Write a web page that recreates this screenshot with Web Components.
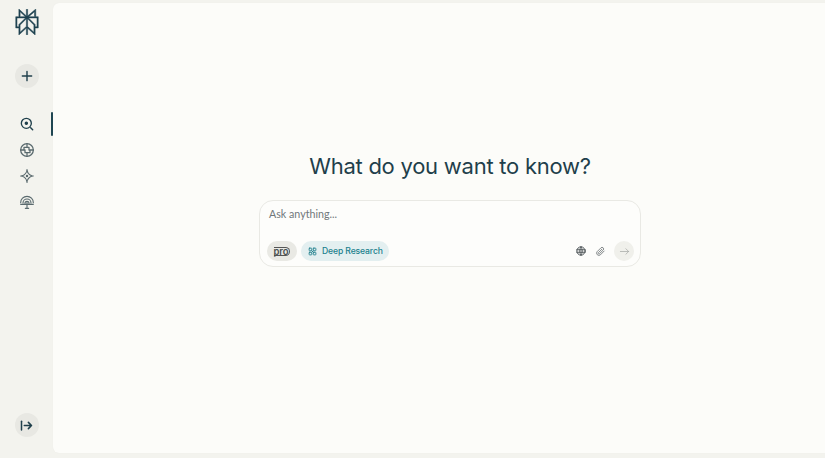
<!DOCTYPE html>
<html><head><meta charset="utf-8"><style>
html,body{margin:0;height:100%;background:#f3f3ee;overflow:hidden}
</style></head><body>
<app-shell>
  <side-bar slot="side"></side-bar>
  <main-panel slot="main">
    <ask-card></ask-card>
  </main-panel>
</app-shell>
<script>
const svg=(s,b,sw=1.5,extra='')=>`<svg width="${s}" height="${s}" viewBox="0 0 24 24" fill="none" stroke="currentColor" stroke-width="${sw}" stroke-linecap="round" stroke-linejoin="round" ${extra}>${b}</svg>`;
class AppShell extends HTMLElement{constructor(){super();this.attachShadow({mode:'open'}).innerHTML=`<style>
:host{display:grid;grid-template-columns:53px 1fr;height:458px;width:825px;font-family:Inter,"Noto Sans",sans-serif}
</style><slot name="side"></slot><slot name="main"></slot>`}}
class SideBar extends HTMLElement{constructor(){super();this.attachShadow({mode:'open'}).innerHTML=`<style>
:host{display:flex;flex-direction:column;align-items:center;height:458px;box-sizing:border-box;padding:9px 0 21px;color:#1f3f4b;position:relative}
.logo{height:26px;width:26px;display:block}
.round{width:24px;height:24px;border-radius:50%;background:#e8e8e3;display:flex;align-items:center;justify-content:center;color:#1f3f4b}
.new{margin-top:29px}
nav{display:flex;flex-direction:column;gap:10px;margin-top:28px;align-items:center}
nav div{width:16px;height:16px;display:flex;color:#5a6a6e}
nav div.on{color:#1f3f4b}
.grow{flex:1}
.bar{position:absolute;right:0;top:112px;width:2px;height:24px;background:#1f4652;border-radius:1px}
</style>
<svg class="logo" viewBox="0 0 24 24" fill="#1f4250" stroke="#1f4250" stroke-width=".45"><path fill-rule="evenodd" d="M22.3977 7.0896h-2.3106V.0676l-7.5094 6.3542V.1577h-1.1554v6.1966L4.4904 0v7.0896H1.6023v10.3976h2.8882V24l6.932-6.3591v6.2005h1.1554v-6.0469l6.9318 6.1807v-6.4879h2.8882V7.0896zm-3.4657-4.531v4.531h-5.355l5.355-4.531zm-13.2862.0676 4.8691 4.4634H5.6458V2.6262zM2.7576 16.332V8.245h7.8476l-6.1149 6.1147v1.9723H2.7576zm2.8882 5.0404v-3.8852h.0001v-2.6488l5.7763-5.7764v7.0111l-5.7764 5.2993zm12.7086.0248-5.7766-5.1509V9.0618l5.7766 5.7766v6.5588zm2.8882-5.0652h-1.733v-1.9723L13.3948 8.245h7.8478v8.087z"/></svg>
<div class="round new">${svg(14,'<path d="M12 4V20M4 12H20"/>',2.4)}</div>
<nav>
<div class="on">${svg(16,'<circle cx="11" cy="11" r="7.5"/><circle cx="11" cy="11" r="1.6" fill="currentColor"/><path d="M17.5 17.5L20.5 20.5" stroke-width="2.2"/>',2)}</div>
<div>${svg(16,'<circle cx="12" cy="12" r="9.5"/><path d="M12 2.5V8H7.5V12H2.5M12 21.5V16H16.5V12H21.5M9 12V16H12M15 12V8H12"/>',1.9)}</div>
<div>${svg(16,'<path d="M12 2.5C12.5 8 16 11.5 21.5 12C16 12.5 12.5 16 12 21.5C11.5 16 8 12.5 2.5 12C8 11.5 11.5 8 12 2.5Z" stroke-dasharray="5.5 1.4"/><circle cx="12" cy="12" r="1" fill="currentColor"/>',1.7)}</div>
<div>${svg(16,'<path d="M2.5 13A9.5 9.5 0 0 1 21.5 13M6 13.5A6 6 0 0 1 18 13.5M9 14A3 3 0 0 1 15 14M2.5 15.5H21.5M12 13V21.5M9.5 21.5H14.5"/>',1.7)}</div>
</nav>
<div class="grow"></div>
<div class="round">${svg(15,'<path d="M4 5V19" stroke-width="2.4"/><path d="M8.5 12H20M15 7L20 12L15 17"/>',2.5)}</div>
<div class="bar"></div>`}}
class MainPanel extends HTMLElement{constructor(){super();this.attachShadow({mode:'open'}).innerHTML=`<style>
:host{display:flex;flex-direction:column;align-items:center;background:#fcfcf9;margin:3px 0 5px;border-radius:6px 0 0 6px;padding:0 0 0 22px;height:450px;box-sizing:border-box;box-shadow:0 0 1px rgba(0,0,0,.06)}
h1{font:400 22px/30px Inter,sans-serif;letter-spacing:-.25px;color:#1f3f4b;margin:148px 0 19px;text-align:center;white-space:nowrap}
</style><h1>What do you want to know?</h1><slot></slot>`}}
class AskCard extends HTMLElement{constructor(){super();this.attachShadow({mode:'open'}).innerHTML=`<style>
:host{display:flex;flex-direction:column;width:382px;height:67px;box-sizing:border-box;border:1px solid #e9e9e4;border-radius:14px;background:#fdfdfb;padding:0 6px 5px 7px;font-family:Inter,sans-serif}
.ph{font:400 10.7px/14px Lato,sans-serif;color:#70777a;margin:5.5px 0 0 2px;flex:1}
.row{display:flex;align-items:center;gap:4px}
.pill{height:20px;border-radius:10px;display:flex;align-items:center;box-sizing:border-box}
.pro{width:30px;background:#e9e9e4;justify-content:center;color:#4a4f50;font:600 9.5px/1 Inter,sans-serif;letter-spacing:-.1px}
.pro span{border-bottom:1px solid #555;border-top:1px solid #555;border-right:1px solid #555;border-radius:0 5px 5px 0;padding:0 1px 0 0;line-height:7px;height:7px;display:block}
.dr{width:88px;background:#e3eff0;color:#20808d;padding-left:7px;gap:5px;font:500 8.6px/1 Inter,sans-serif;letter-spacing:-.12px;white-space:nowrap}
.grow{flex:1}
.ic{width:14px;height:14px;color:#50575a;display:flex;align-items:center;justify-content:center;margin-right:1px}
.go{width:20px;height:20px;border-radius:50%;background:#f0f0eb;color:#a6a8a5;display:flex;align-items:center;justify-content:center;margin-left:2px}
</style>
<div class="ph">Ask anything...</div>
<div class="row">
<div class="pill pro"><span>pro</span></div>
<div class="pill dr">${svg(9,'<rect x="3" y="3" width="7" height="7" rx="1.5"/><rect x="14" y="3" width="7" height="7" rx="1.5"/><rect x="3" y="14" width="7" height="7" rx="1.5"/><rect x="14" y="14" width="7" height="7" rx="1.5"/><path d="M10 10L14 14M14 10L10 14"/>',2.4)}<span>Deep Research</span></div>
<div class="grow"></div>
<div class="ic">${svg(10,'<circle cx="12" cy="12" r="10"/><path d="M2 9H22M2 15H22M12 2C8 6 8 18 12 22M12 2C16 6 16 18 12 22"/>',2.4)}</div>
<div class="ic" style="color:#7b8082">${svg(11,'<path d="M20 11L11.5 19.5A5 5 0 0 1 4.5 12.5L13 4A3.3 3.3 0 0 1 17.8 8.8L9.5 17A1.6 1.6 0 0 1 7.2 14.7L15 7"/>',2)}</div>
<div class="go">${svg(11,'<path d="M3 12H21M15 6L21 12L15 18"/>',1.6)}</div>
</div>`}}
customElements.define('app-shell',AppShell);
customElements.define('side-bar',SideBar);
customElements.define('main-panel',MainPanel);
customElements.define('ask-card',AskCard);
</script>
</body></html>
